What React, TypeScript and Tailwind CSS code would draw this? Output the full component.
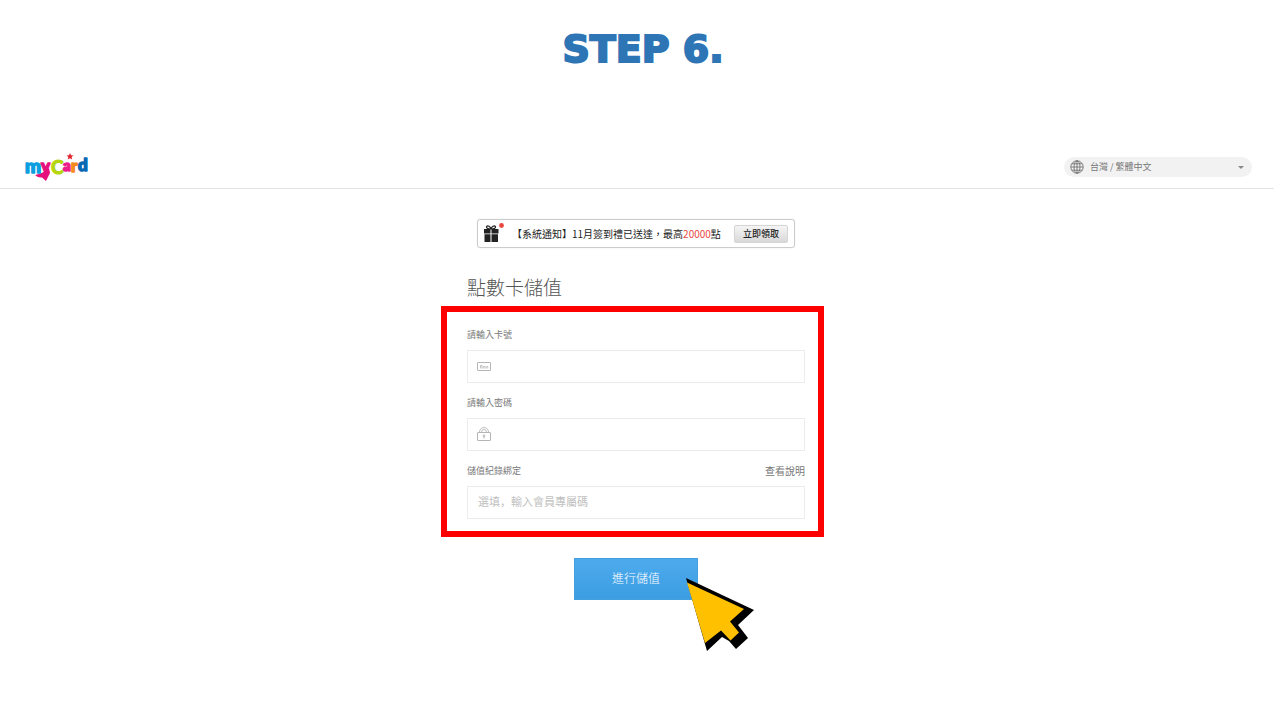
import React from 'react';

const Logo: React.FC = () => (
  <svg width="66" height="30" viewBox="0 0 66 30" role="img" aria-label="MyCard" className="font-['Lato'] font-black">
    <path d="M11 23 Q16 22 20 20 L25 16 L26 21 L22 29 L18 25.500 Q14 26 11 23 Z" fill="#e5127d" />
    <g strokeWidth="1.500" strokeLinejoin="round">
      <text x="1" y="21" fontSize="19" fill="#0b9fe0" stroke="#0b9fe0">m</text>
      <text x="17" y="20" fontSize="17" fill="#e5127d" stroke="#e5127d">y</text>
      <text x="39" y="19" fontSize="15" fill="#ec1c8b" stroke="#ec1c8b">a</text>
      <text x="47" y="20" fontSize="17" fill="#f58a1f" stroke="#f58a1f">r</text>
      <text x="54" y="19" fontSize="17" fill="#0868b4" stroke="#0868b4">d</text>
    </g>
    <text x="27" y="22" fontSize="19" fill="#b5d60f" stroke="#b5d60f">C</text>
    <path d="M46 1 L47 3.300 L49.500 3.500 L47.600 5 L48.200 7.500 L46 6.200 L43.800 7.500 L44.400 5 L42.500 3.500 L45 3.300 Z" fill="#e2232e" />
  </svg>
);

const GlobeIcon: React.FC = () => (
  <svg width="14" height="14" viewBox="0 0 14 14" fill="none" stroke="#666" strokeWidth="0.800" className="pointer-events-none absolute left-[6px] top-[3px]">
    <circle cx="7" cy="7" r="6.200" />
    <ellipse cx="7" cy="7" rx="3" ry="6.200" />
    <path d="M7 0.800 V13.200 M0.800 7 H13.200 M1.700 3.800 H12.300 M1.700 10.200 H12.300" />
  </svg>
);

const GiftIcon: React.FC = () => (
  <svg width="22" height="22" viewBox="0 0 22 22">
    <path d="M1 6 H7.500 V10.500 H1 Z M8.500 6 H15.500 V10.500 H8.500 Z M1.500 11.300 H7.500 V19 H1.500 Z M8.500 11.300 H15 V19 H8.500 Z" fill="#222" />
    <path d="M8 6 C5 6 3 5 3.500 3.800 C4.500 2 7.500 3.500 8 6 C8.500 3.500 11.500 2 12.500 3.800 C13 5 11 6 8 6 Z" fill="none" stroke="#222" strokeWidth="1.200" />
    <circle cx="18.500" cy="2.500" r="2.400" fill="#e8473f" />
  </svg>
);

const CardIcon: React.FC = () => (
  <svg width="14" height="14" viewBox="0 0 14 14" fill="none" stroke="#b5b5b5">
    <rect x="0.500" y="3.500" width="13" height="8" rx="0.500" />
    <path d="M3.500 9.500 V6.500 H5 V9.500 M6.300 9.500 V7.500 H8 V9.500 M9.200 9.500 V7.500 H10.800 V9.500" strokeWidth="0.800" />
  </svg>
);

const LockIcon: React.FC = () => (
  <svg width="14" height="14" viewBox="0 0 14 14" fill="none" stroke="#b5b5b5">
    <rect x="0.500" y="5.500" width="13" height="8" rx="0.500" />
    <path d="M2.500 5.500 V5 A4.500 4.500 0 0 1 11.500 5 V5.500 M4.500 5.500 V5 A2.500 2.500 0 0 1 9.500 5 V5.500" strokeWidth="0.900" />
    <path d="M7 11.500 V9.500" />
    <circle cx="7" cy="8.800" r="0.900" />
  </svg>
);

type FieldProps = {
  id: string;
  label: string;
  type?: string;
  placeholder?: string;
  icon?: React.ReactNode;
  link?: string;
};

const Field: React.FC<FieldProps> = ({ id, label, type = 'text', placeholder, icon, link }) => (
  <div>
    <div className="flex h-4 items-center justify-between">
      <label htmlFor={id} className="text-[9px] leading-4 text-[#777]">{label}</label>
      {link && <a href="#help" className="text-[10px] leading-4 text-[#777]">{link}</a>}
    </div>
    <div className="relative mt-[7px]">
      {icon && <span className="pointer-events-none absolute left-[10px] top-[9px]">{icon}</span>}
      <input
        id={id}
        type={type}
        placeholder={placeholder}
        className={`block h-[33px] w-full border border-[#ececec] bg-white pb-1 pr-3 font-['Noto_Sans_CJK_SC',sans-serif] text-[11px] outline-none placeholder:text-[#c0c0c0] ${icon ? 'pl-8' : 'pl-[10px]'}`}
      />
    </div>
  </div>
);

const CursorArrow: React.FC = () => (
  <svg width="72" height="76" viewBox="0 0 72 76" className="pointer-events-none absolute left-[111px] top-[19px]">
    <path d="M1 1 L69 33 L53 48 L63 61 L51 72 L44 64 L37 60 L22 74 Z" fill="#000" />
    <path d="M2 5.500 L59 32 L45 44.500 L54 55.500 L45.500 63.500 L36 53.500 L20 66 Z" fill="#ffc000" />
  </svg>
);

const App: React.FC = () => (
  <div className="min-h-screen bg-white font-['Noto_Sans_CJK_TC',sans-serif]">
    <h1 className="pl-[6px] pt-[25px] text-center font-['DejaVu_Sans'] text-[38px] font-bold leading-[48px] text-[#2e75b6] [-webkit-text-stroke:2px_#2e75b6]">
      STEP 6.
    </h1>

    <header className="mr-[6px] mt-[74px] flex h-[42px] items-center justify-between border-b border-[#e4e4e4] pb-px pl-6 pr-[22px]">
      <a href="#home"><Logo /></a>
      <div className="relative">
        <GlobeIcon />
        <select aria-label="語言" className="block h-5 w-[188px] appearance-none rounded-full bg-[#f2f2f2] pl-[26px] pr-6 text-[9px] leading-5 text-[#777]">
          <option>台灣 / 繁體中文</option>
        </select>
        <span className="pointer-events-none absolute right-2 top-[9px] border-x-[3px] border-t-[3px] border-x-transparent border-t-[#888]" />
      </div>
    </header>

    <main className="mr-2 flex flex-col items-center pt-[30px]">
      <div className="flex h-[29px] w-[318px] items-center rounded-[3px] border border-[#ccc] pl-[5px] pr-[6px] text-[10px] text-[#222] shadow-[0_0_1px_#ccc]">
        <GiftIcon />
        <p className="ml-[7px] whitespace-nowrap">
          【系統通知】11月簽到禮已送達，最高<span className="text-[#e8473f]">20000</span>點
        </p>
        <button type="button" className="ml-auto h-[18px] w-[54px] rounded-[2px] border border-[#d5d5d5] bg-linear-to-b from-[#f5f5f5] to-[#d8d8d8] text-[9px] font-medium leading-4">
          立即領取
        </button>
      </div>

      <form className="mt-[25px] w-[338px]">
        <h2 className="text-[19px] font-light leading-7 text-[#555]">點數卡儲值</h2>
        <div className="-ml-[26px] -mr-[19px] mt-[5px] flex flex-col gap-3 border-[6px] border-[#ff0000] pb-3 pl-5 pr-[13px] pt-[15px]">
          <Field id="card-number" label="請輸入卡號" icon={<CardIcon />} />
          <Field id="card-password" label="請輸入密碼" type="password" icon={<LockIcon />} />
          <Field id="member-code" label="儲值紀錄綁定" placeholder="選填，輸入會員專屬碼" link="查看說明" />
        </div>
        <div className="relative mx-auto mt-[21px] w-[124px]">
          <button type="button" className="block h-[42px] w-full border border-[#439fdd] bg-linear-to-b from-[#4dabed] to-[#3c9de2] pb-[2px] text-[12px] font-light text-white">
            進行儲值
          </button>
          <CursorArrow />
        </div>
      </form>
    </main>
  </div>
);

export default App;
